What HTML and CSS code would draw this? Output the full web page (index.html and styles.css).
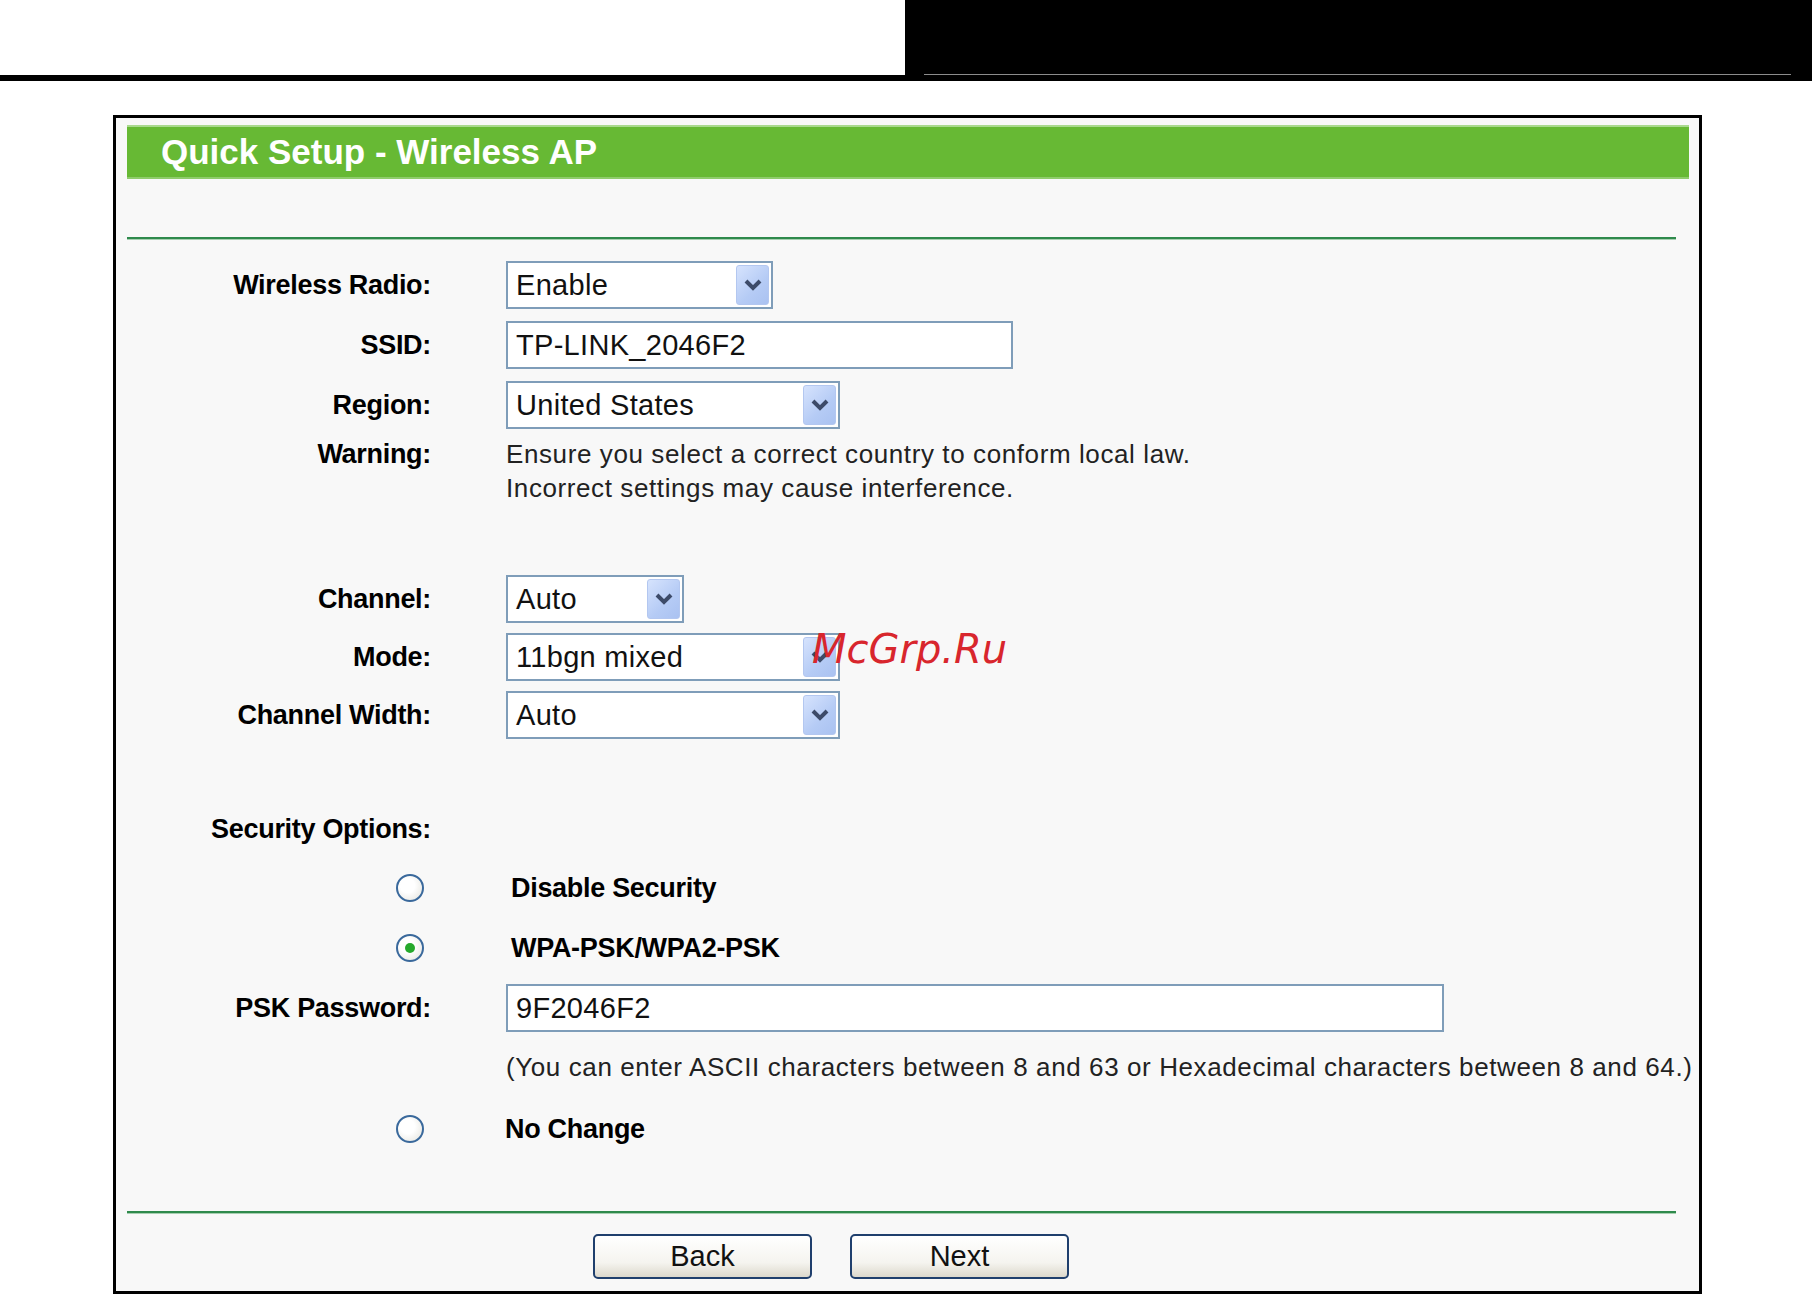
FILE: index.html
```html
<!DOCTYPE html>
<html lang="en">
<head>
    <meta charset="UTF-8">
    <title>Quick Setup - Wireless AP</title>
    <link rel="stylesheet" href="styles.css">
</head>
<body>
    <div class="topbar">
        <div class="topbar-left"></div>
        <div class="topbar-right"><div class="topbar-rule"></div></div>
    </div>
    <div class="topline"></div>

    <div class="panel">
        <h1 class="title">Quick Setup - Wireless AP</h1>
        <div class="divider"></div>

        <div class="form">
            <div class="row">
                <div class="lbl">Wireless Radio:</div>
                <div class="select w-radio"><span>Enable</span><span class="drop"><svg width="20" height="12" viewBox="0 0 20 12"><polyline points="3,2 10,9 17,2" fill="none" stroke="#3d4b69" stroke-width="4"/></svg></span></div>
            </div>
            <div class="row">
                <div class="lbl">SSID:</div>
                <div class="field w-ssid">TP-LINK_2046F2</div>
            </div>
            <div class="row">
                <div class="lbl">Region:</div>
                <div class="select w-mid"><span>United States</span><span class="drop"><svg width="20" height="12" viewBox="0 0 20 12"><polyline points="3,2 10,9 17,2" fill="none" stroke="#3d4b69" stroke-width="4"/></svg></span></div>
            </div>
            <div class="row warning">
                <div class="lbl">Warning:</div>
                <div class="note">Ensure you select a correct country to conform local law.<br>Incorrect settings may cause interference.</div>
            </div>

            <div class="row tight gap-channel">
                <div class="lbl">Channel:</div>
                <div class="select w-small"><span>Auto</span><span class="drop"><svg width="20" height="12" viewBox="0 0 20 12"><polyline points="3,2 10,9 17,2" fill="none" stroke="#3d4b69" stroke-width="4"/></svg></span></div>
            </div>
            <div class="row tight">
                <div class="lbl">Mode:</div>
                <div class="select w-mid"><span>11bgn mixed</span><span class="drop"><svg width="20" height="12" viewBox="0 0 20 12"><polyline points="3,2 10,9 17,2" fill="none" stroke="#3d4b69" stroke-width="4"/></svg></span></div>
            </div>
            <div class="row tight">
                <div class="lbl">Channel Width:</div>
                <div class="select w-mid"><span>Auto</span><span class="drop"><svg width="20" height="12" viewBox="0 0 20 12"><polyline points="3,2 10,9 17,2" fill="none" stroke="#3d4b69" stroke-width="4"/></svg></span></div>
            </div>

            <div class="row tight gap-security">
                <div class="lbl">Security Options:</div>
                <div></div>
            </div>
            <div class="row">
                <div class="lbl"><span class="radio"></span></div>
                <div class="opt">Disable Security</div>
            </div>
            <div class="row">
                <div class="lbl"><span class="radio checked"></span></div>
                <div class="opt">WPA-PSK/WPA2-PSK</div>
            </div>
            <div class="row">
                <div class="lbl">PSK Password:</div>
                <div class="field w-psk">9F2046F2</div>
            </div>
            <div class="row tight">
                <div></div>
                <div class="hint">(You can enter ASCII characters between 8 and 63 or Hexadecimal characters between 8 and 64.)</div>
            </div>
            <div class="row last">
                <div class="lbl"><span class="radio"></span></div>
                <div class="opt nochange">No Change</div>
            </div>
        </div>

        <div class="divider bottom"></div>

        <div class="buttons">
            <button class="btn">Back</button>
            <button class="btn">Next</button>
        </div>

        <div class="watermark">McGrp.Ru</div>
    </div>
</body>
</html>
```

FILE: styles.css
```css
body, html {
    margin: 0;
    padding: 0;
    font-family: "Liberation Sans", Arial, sans-serif;
    background-color: #fff;
}

.topbar {
    display: flex;
    height: 75px;
}

.topbar-left {
    width: 905px;
    background-color: #fff;
}

.topbar-right {
    flex: 1;
    background-color: #000;
    padding: 0 21px 0 19px;
}

.topbar-rule {
    height: 74px;
    border-bottom: 1px solid #8c8c8c;
}

.topline {
    height: 6px;
    background-color: #000;
}

.panel {
    position: relative;
    box-sizing: border-box;
    width: 1589px;
    margin: 34px 0 0 113px;
    padding: 7px 10px 12px 11px;
    border: 3px solid #000;
    background-color: #f8f8f8;
}

.title {
    display: flex;
    align-items: center;
    height: 54px;
    margin: 0;
    padding-left: 34px;
    box-sizing: border-box;
    background-color: #67b934;
    box-shadow: inset 0 2px 0 #a9d98e, inset 0 -2px 0 #8fcc6c;
    color: #fff;
    font-size: 35px;
    font-weight: bold;
}

.divider {
    height: 2px;
    margin: 58px 13px 0 0;
    background-color: #2f8a4c;
    box-shadow: 0 1px 0 #a7cfb1;
}

.divider.bottom {
    margin-top: 49px;
}

.form {
    margin-top: 16px;
}

.row {
    display: grid;
    grid-template-columns: 304px 1fr;
    column-gap: 75px;
    align-items: center;
    height: 60px;
}

.row.tight {
    height: 58px;
}

.row.last {
    height: 66px;
}

.row.warning {
    align-items: start;
    height: auto;
    margin-top: 2px;
    line-height: 34px;
}

.row.gap-channel {
    margin-top: 65px;
}

.row.gap-security {
    margin-top: 56px;
}

.lbl {
    display: flex;
    justify-content: flex-end;
    align-items: center;
    font-size: 27px;
    font-weight: bold;
    letter-spacing: -0.3px;
    color: #000;
}

.note,
.hint {
    font-size: 26px;
    letter-spacing: 0.6px;
    color: #222;
}

.hint {
    white-space: nowrap;
}

.select,
.field {
    display: flex;
    align-items: center;
    box-sizing: border-box;
    height: 48px;
    padding-left: 8px;
    border: 2px solid #7f9db9;
    background-color: #fff;
    font-size: 29px;
    letter-spacing: 0.3px;
    color: #111;
}

.select span:first-child {
    flex: 1;
}

.drop {
    display: flex;
    align-items: center;
    justify-content: center;
    box-sizing: border-box;
    width: 33px;
    height: 40px;
    margin-right: 2px;
    border: 1px solid #b3c7f0;
    border-radius: 3px;
    background: linear-gradient(135deg, #d6e3fd, #b5cbf5 60%, #aac2f1);
}

.w-radio { width: 267px; }
.w-ssid  { width: 507px; }
.w-mid   { width: 334px; }
.w-small { width: 178px; }
.w-psk   { width: 938px; }

.radio {
    display: block;
    position: relative;
    box-sizing: border-box;
    width: 28px;
    height: 28px;
    margin-right: 7px;
    border: 2px solid #3a699c;
    border-radius: 50%;
    background: radial-gradient(circle at 40% 40%, #fff 35%, #e2e1da);
}

.radio.checked::after {
    content: "";
    position: absolute;
    left: 7px;
    top: 7px;
    width: 10px;
    height: 10px;
    border-radius: 50%;
    background-color: #26a92c;
}

.opt {
    padding-left: 5px;
    font-size: 27px;
    font-weight: bold;
    letter-spacing: -0.3px;
    color: #000;
}

.opt.nochange {
    padding-left: 0;
    margin-left: -1px;
}

.buttons {
    display: flex;
    gap: 38px;
    margin-top: 21px;
    padding-left: 466px;
}

.btn {
    width: 219px;
    height: 45px;
    border: 2px solid #1f3f6d;
    border-radius: 5px;
    background: linear-gradient(#fff, #f5f4ef 65%, #dcd8cc);
    font-family: "Liberation Sans", Arial, sans-serif;
    font-size: 29px;
    color: #111;
}

.watermark {
    position: absolute;
    left: 696px;
    top: 511px;
    font-family: "DejaVu Sans", sans-serif;
    font-size: 40px;
    font-style: italic;
    line-height: 40px;
    color: #d8262d;
}
```
